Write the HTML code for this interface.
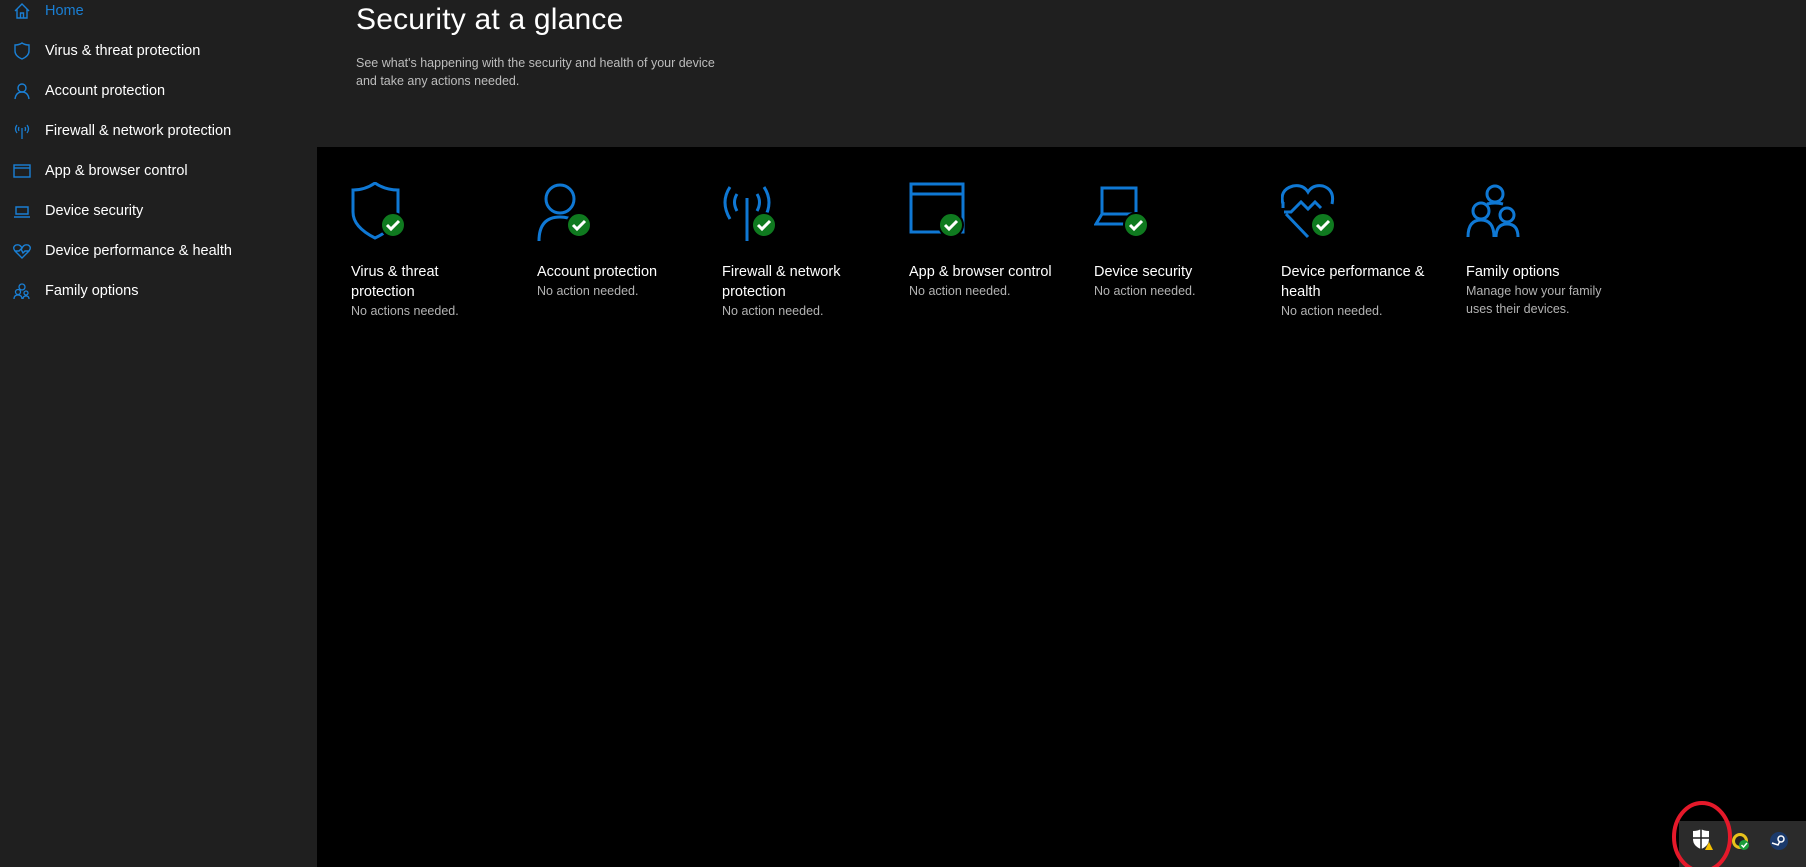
<!DOCTYPE html>
<html><head><meta charset="utf-8"><style>
*{margin:0;padding:0;box-sizing:border-box}
body{width:1806px;height:867px;background:#000;font-family:"Liberation Sans",sans-serif;position:relative;overflow:hidden;color:#fff}
#side{position:absolute;left:0;top:0;width:317px;height:867px;background:#1f1f1f}
#head{position:absolute;left:317px;top:0;width:1489px;height:147px;background:#1f1f1f}
.nav{position:absolute;left:45px;font-size:14.5px;color:#fff;line-height:18px}
.nav.h{color:#1a7fd4}
.ni{position:absolute;left:12px;width:20px;height:20px}
h1{position:absolute;left:356px;top:3px;font-size:30px;font-weight:normal;color:#fff;letter-spacing:0.2px}
.desc{position:absolute;left:356px;top:54px;font-size:12.5px;line-height:18px;color:#bdbdbd}
.tile{position:absolute;top:182px;width:180px}
.tile svg{display:block;width:60px;height:60px}
.lbl{margin-top:20px;font-size:14.5px;line-height:20px;color:#fff}
.sub{font-size:12.5px;line-height:18px;color:#b3b3b3}
#tray{position:absolute;left:1679px;top:821px;width:127px;height:46px;background:#2b2b2b}
</style></head><body>
<div id="side"></div><div id="head"></div>

<svg class="ni" style="top:1px" viewBox="0 0 20 20" fill="none" stroke="#1a7fd4" stroke-width="1.4"><path d="M3 10 L10 3 L17 10 M5 8 V17 H15 V8 M8.5 17 V12 H11.5 V17"/></svg>
<div class="nav h" style="top:2px">Home</div>
<svg class="ni" style="top:41px" viewBox="0 0 20 20" fill="none" stroke="#1a7fd4" stroke-width="1.4"><path d="M3 4 Q7 4 10 2 Q13 4 17 4 V10 Q17 15 10 18 Q3 15 3 10Z"/></svg>
<div class="nav" style="top:42px">Virus &amp; threat protection</div>
<svg class="ni" style="top:81px" viewBox="0 0 20 20" fill="none" stroke="#1a7fd4" stroke-width="1.4"><circle cx="10" cy="7" r="4"/><path d="M3 18 Q4 11 10 11 Q16 11 17 18"/></svg>
<div class="nav" style="top:82px">Account protection</div>
<svg class="ni" style="top:121px" viewBox="0 0 20 20" fill="none" stroke="#1a7fd4" stroke-width="1.3"><path d="M10 7 V18 M5 4 Q2 8 5 12 M15 4 Q18 8 15 12 M7 6 Q6 8 7 10 M13 6 Q14 8 13 10"/></svg>
<div class="nav" style="top:122px">Firewall &amp; network protection</div>
<svg class="ni" style="top:161px" viewBox="0 0 20 20" fill="none" stroke="#1a7fd4" stroke-width="1.4"><rect x="2" y="4" width="16" height="12"/><path d="M2 7 H18"/></svg>
<div class="nav" style="top:162px">App &amp; browser control</div>
<svg class="ni" style="top:201px" viewBox="0 0 20 20" fill="none" stroke="#1a7fd4" stroke-width="1.4"><path d="M4 6 H16 V13 H4Z M2 16 H18"/></svg>
<div class="nav" style="top:202px">Device security</div>
<svg class="ni" style="top:241px" viewBox="0 0 20 20" fill="none" stroke="#1a7fd4" stroke-width="1.4"><path d="M10 17 L3 10 Q0 6 4 4 Q8 3 10 7 Q12 3 16 4 Q20 6 17 10Z M3 10 H7 L9 8 L11 12 L13 10 H17"/></svg>
<div class="nav" style="top:242px">Device performance &amp; health</div>
<svg class="ni" style="top:281px" viewBox="0 0 20 20" fill="none" stroke="#1a7fd4" stroke-width="1.3"><circle cx="10" cy="6" r="3"/><circle cx="6" cy="11" r="2.5"/><circle cx="14" cy="12" r="2"/><path d="M2 18 Q2 14 6 14 Q10 14 10 18 M11 18 Q11 15 14 15 Q17 15 17 18"/></svg>
<div class="nav" style="top:282px">Family options</div>

<h1>Security at a glance</h1>
<div class="desc">See what's happening with the security and health of your device<br>and take any actions needed.</div>

<div class="tile" style="left:351px"><svg viewBox="0 0 60 60" fill="none" stroke="#0f78d4" stroke-width="3"><path d="M2 8 Q14 8 24 1 Q34 8 47 8 V30 Q47 45 24 56 Q2 45 2 30Z"/><circle cx="42" cy="43" r="12" fill="#0f7a1f" stroke="#000" stroke-width="2"/><path d="M36 43 L40 47 L48 39" stroke="#fff" stroke-width="3"/></svg>
<div class="lbl">Virus &amp; threat<br>protection</div><div class="sub">No actions needed.</div></div>

<div class="tile" style="left:537px"><svg viewBox="0 0 60 60" fill="none" stroke="#0f78d4" stroke-width="3"><circle cx="23" cy="17" r="14"/><path d="M2 59 Q2 35 23 35 Q40 35 44 50"/><circle cx="42" cy="43" r="12" fill="#0f7a1f" stroke="#000" stroke-width="2"/><path d="M36 43 L40 47 L48 39" stroke="#fff" stroke-width="3"/></svg>
<div class="lbl">Account protection</div><div class="sub">No action needed.</div></div>

<div class="tile" style="left:722px"><svg viewBox="0 0 60 60" fill="none" stroke="#0f78d4" stroke-width="3"><path d="M25 16 V59 M8 5 Q-2 20 8 37 M42 5 Q52 20 42 37 M15 12 Q10 20 15 29 M35 12 Q40 20 35 29"/><circle cx="42" cy="43" r="12" fill="#0f7a1f" stroke="#000" stroke-width="2"/><path d="M36 43 L40 47 L48 39" stroke="#fff" stroke-width="3"/></svg>
<div class="lbl">Firewall &amp; network<br>protection</div><div class="sub">No action needed.</div></div>

<div class="tile" style="left:909px"><svg viewBox="0 0 60 60" fill="none" stroke="#0f78d4" stroke-width="3"><rect x="2" y="2" width="52" height="48"/><path d="M2 12 H54"/><circle cx="42" cy="43" r="12" fill="#0f7a1f" stroke="#000" stroke-width="2"/><path d="M36 43 L40 47 L48 39" stroke="#fff" stroke-width="3"/></svg>
<div class="lbl">App &amp; browser control</div><div class="sub">No action needed.</div></div>

<div class="tile" style="left:1094px"><svg viewBox="0 0 60 60" fill="none" stroke="#0f78d4" stroke-width="3"><path d="M8 6 H42 V32 H8Z M8 32 L2 42 H42"/><circle cx="42" cy="43" r="12" fill="#0f7a1f" stroke="#000" stroke-width="2"/><path d="M36 43 L40 47 L48 39" stroke="#fff" stroke-width="3"/></svg>
<div class="lbl">Device security</div><div class="sub">No action needed.</div></div>

<div class="tile" style="left:1281px"><svg viewBox="0 0 60 60" fill="none" stroke="#0f78d4" stroke-width="3"><path d="M27 55 L5 32 M2 22 Q-2 8 12 4 Q22 2 27 10 Q32 2 42 4 Q54 8 51 22 M2 26 V20 M3 30 H10 L20 20 L27 27 L34 20 L40 26"/><circle cx="42" cy="43" r="12" fill="#0f7a1f" stroke="#000" stroke-width="2"/><path d="M36 43 L40 47 L48 39" stroke="#fff" stroke-width="3"/></svg>
<div class="lbl">Device performance &amp;<br>health</div><div class="sub">No action needed.</div></div>

<div class="tile" style="left:1466px"><svg viewBox="0 0 60 60" fill="none" stroke="#0f78d4" stroke-width="3"><circle cx="29" cy="12" r="8"/><circle cx="15" cy="29" r="8"/><circle cx="41" cy="33" r="7"/><path d="M2 55 Q2 38 15 38 Q28 38 28 55 M30 55 Q30 42 41 42 Q52 42 52 55 M21 22 Q29 20 37 22"/></svg>
<div class="lbl">Family options</div><div class="sub">Manage how your family<br>uses their devices.</div></div>

<div id="tray"></div>
<svg style="position:absolute;left:1690px;top:828px" width="24" height="24" viewBox="0 0 24 24"><path d="M3 3 Q8 3 11 1 Q14 3 19 3 V11 Q19 18 11 21 Q3 18 3 11Z" fill="#fff"/><path d="M11 1 V21 M3 10 H19" stroke="#1f1f1f" stroke-width="1.5"/><path d="M15 22 L19 14 L23 22Z" fill="#f5c000"/></svg>
<svg style="position:absolute;left:1730px;top:830px" width="22" height="22" viewBox="0 0 22 22"><circle cx="10" cy="11" r="8" fill="#e8c21c"/><circle cx="10" cy="11" r="5" fill="#222"/><circle cx="14" cy="15" r="5" fill="#1a9c3a"/><path d="M11.5 15 L13.5 17 L17 13" stroke="#fff" stroke-width="1.5" fill="none"/></svg>
<svg style="position:absolute;left:1769px;top:831px" width="20" height="20" viewBox="0 0 20 20"><circle cx="10" cy="10" r="9" fill="#1b3a6b"/><circle cx="12" cy="8" r="3" fill="none" stroke="#fff" stroke-width="1.5"/><path d="M3 12 L9 14 L11 10" stroke="#fff" stroke-width="1.5" fill="none"/></svg>
<svg style="position:absolute;left:1670px;top:800px" width="64" height="67"><ellipse cx="32" cy="37" rx="28" ry="34" fill="none" stroke="#e5192a" stroke-width="4"/></svg>
</body></html>
